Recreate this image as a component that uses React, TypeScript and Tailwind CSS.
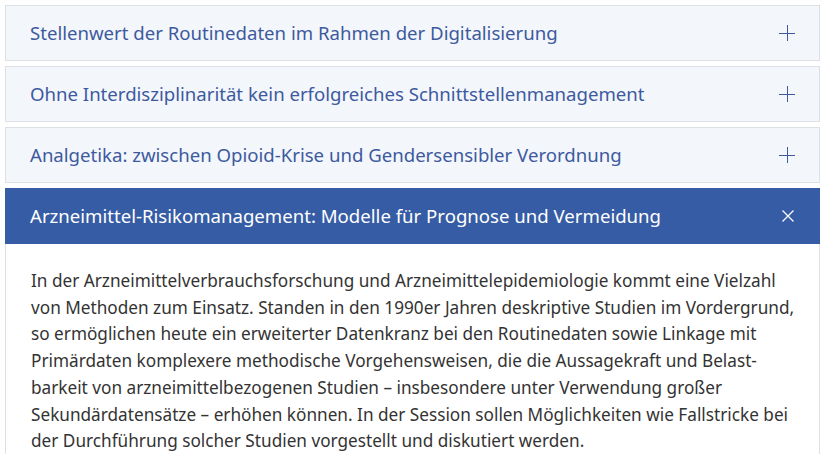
import React, { useState } from 'react';

interface Item {
  title: string;
  lines?: string[];
}

const items: Item[] = [
  { title: 'Stellenwert der Routinedaten im Rahmen der Digitalisierung' },
  { title: 'Ohne Interdisziplinarität kein erfolgreiches Schnittstellenmanagement' },
  { title: 'Analgetika: zwischen Opioid-Krise und Gendersensibler Verordnung' },
  {
    title: 'Arzneimittel-Risikomanagement: Modelle für Prognose und Vermeidung',
    lines: [
      'In der Arzneimittelverbrauchsforschung und Arzneimittelepidemiologie kommt eine Vielzahl',
      'von Methoden zum Einsatz. Standen in den 1990er Jahren deskriptive Studien im Vordergrund,',
      'so ermöglichen heute ein erweiterter Datenkranz bei den Routinedaten sowie Linkage mit',
      'Primärdaten komplexere methodische Vorgehensweisen, die die Aussagekraft und Belast-',
      'barkeit von arzneimittelbezogenen Studien – insbesondere unter Verwendung großer',
      'Sekundärdatensätze – erhöhen können. In der Session sollen Möglichkeiten wie Fallstricke bei',
      'der Durchführung solcher Studien vorgestellt und diskutiert werden.',
    ],
  },
];

const PlusIcon = () => (
  <svg width="16" height="16" viewBox="0 0 16 16" className="text-[#3d5a9e]">
    <path d="M0 8.5H16M8.5 0V16" stroke="currentColor" strokeWidth="1" />
  </svg>
);

const CloseIcon = () => (
  <svg width="12" height="12" viewBox="0 0 12 12" className="text-white">
    <path d="M0.5 0.5L11.5 11.5M11.5 0.5L0.5 11.5" stroke="currentColor" strokeWidth="1.2" />
  </svg>
);

export default function App() {
  const [open, setOpen] = useState<number>(3);

  return (
    <div className="flex flex-col gap-[5px] p-[5px] pr-[6px] bg-white" style={{ fontFamily: '"Noto Sans", "Open Sans", sans-serif' }}>
      {items.map((item, i) => {
        const active = open === i;
        return (
          <div key={i} className="flex flex-col">
            <button
              onClick={() => setOpen(active ? -1 : i)}
              className={
                active
                  ? 'flex h-[56px] items-center justify-between border border-[#365ca5] bg-[#365ca5] pl-[24px] pr-[25px] text-left text-[18.6px] text-white'
                  : 'flex h-[56px] items-center justify-between border border-[#dde0e5] bg-[#f3f6fb] pl-[24px] pr-[24px] text-left text-[18.6px] text-[#3d5a9e]'
              }
            >
              <span>{item.title}</span>
              {active ? <CloseIcon /> : <PlusIcon />}
            </button>
            {active && item.lines && (
              <div className="border-x border-[#dde0e5] pl-[25px] pr-4 pt-[24px] pb-4 text-[17.2px] leading-[26.7px] text-[#333333]">
                {item.lines.map((l, j) => (
                  <div key={j} className="whitespace-nowrap">{l}</div>
                ))}
              </div>
            )}
          </div>
        );
      })}
    </div>
  );
}
